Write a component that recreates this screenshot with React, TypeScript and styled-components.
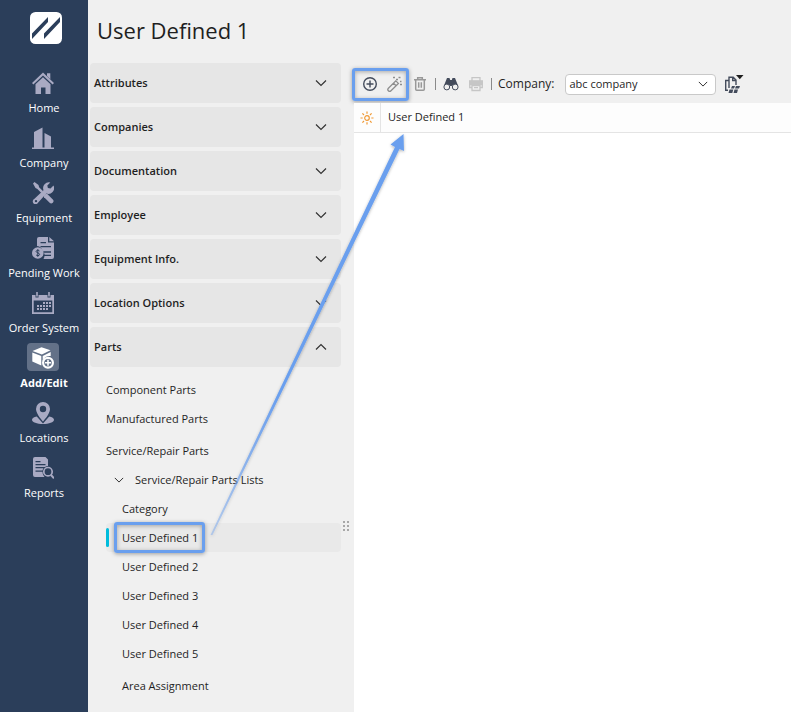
import React, { useState } from "react";
import styled, { createGlobalStyle } from "styled-components";

const Global = createGlobalStyle`
  *, *::before, *::after { box-sizing: border-box; }
  body { margin: 0; background: #f0f0f0; }
  body, button, select { font-family: "Open Sans", "Noto Sans", sans-serif; }
  button { margin: 0; padding: 0; border: 0; background: none; color: inherit; cursor: pointer; }
`;

const HIGHLIGHT = "#6a9fee";

const Shell = styled.div`
  position: relative;
  display: flex;
  min-height: 100vh;
  background: #f0f0f0;
  color: #1f1f1f;
`;

const Sidebar = styled.nav`
  flex: 0 0 88px;
  display: flex;
  flex-direction: column;
  align-items: center;
  padding-top: 12px;
  background: #2b3e5a;
`;

const Logo = styled.svg`
  width: 32px;
  height: 32px;
  margin: 0 0 24px 4px;
`;

const NavItem = styled.button<{ $active?: boolean }>`
  display: flex;
  flex-direction: column;
  align-items: center;
  gap: 4px;
  width: 100%;
  height: 55px;
  color: #fff;
  font-size: 11px;
  font-weight: ${(p) => (p.$active ? 700 : 400)};
  line-height: 16px;
  white-space: nowrap;
`;

const NavIcon = styled.span<{ $active?: boolean }>`
  display: flex;
  align-items: center;
  justify-content: center;
  width: 32px;
  height: 28px;
  margin-right: 2px;
  padding-top: 1px;
  border-radius: 4px;
  background: ${(p) => (p.$active ? "#637188" : "transparent")};
  color: ${(p) => (p.$active ? "#fff" : "#a9aac3")};
`;

const Content = styled.div`
  flex: 1;
  min-width: 0;
  display: flex;
  flex-direction: column;
`;

const Title = styled.h1`
  margin: 0;
  padding: 14px 9px 17px;
  font-size: 22px;
  font-weight: 400;
  line-height: 32px;
`;

const Columns = styled.div`
  flex: 1;
  display: flex;
`;

const TreePane = styled.div`
  flex: 0 0 253px;
  padding-left: 2px;
`;

const Accordion = styled.div`
  display: flex;
  flex-direction: column;
  gap: 4px;
`;

const AccordionHeader = styled.button`
  display: flex;
  align-items: center;
  justify-content: space-between;
  height: 40px;
  padding: 0 14px 0 4px;
  border-radius: 4px;
  background: #e6e6e6;
  font-size: 11px;
  font-weight: 600;
  line-height: 16px;
`;

const TreeList = styled.ul`
  display: flex;
  flex-direction: column;
  margin: 0;
  padding: 8px 0 0 16px;
  list-style: none;
`;

const TreeRow = styled.li<{ $selected?: boolean; $gap?: boolean }>`
  display: flex;
  align-items: center;
  height: 29px;
  margin-top: ${(p) => (p.$gap ? 3 : 0)}px;
  border-radius: 4px;
  background: ${(p) => (p.$selected ? "#e9e9e9" : "transparent")};
`;

const TreeLink = styled.button<{ $level: number }>`
  display: flex;
  align-items: center;
  gap: 11px;
  padding-left: ${(p) => p.$level * 8}px;
  font-size: 11px;
  line-height: 16px;
  white-space: nowrap;
`;

const SelectedBar = styled.span`
  width: 3px;
  height: 19px;
  margin-right: 5px;
  border-radius: 2px;
  background: #00bcdc;
`;

const Callout = styled.div`
  display: flex;
  align-items: center;
  height: 31px;
  border: 3px solid ${HIGHLIGHT};
  border-radius: 3px;
  box-shadow: 0 1px 4px rgba(0, 0, 0, 0.35), inset 0 1px 4px rgba(0, 0, 0, 0.3);
`;

const TreeCallout = styled(Callout)`
  flex: none;
  padding: 0 4px 0 5px;
`;

const Splitter = styled.div`
  flex: 0 0 13px;
  padding: 458px 0 0 2px;
  color: #a8a8a8;
  & > svg { display: block; }
`;

const Main = styled.main`
  flex: 1;
  min-width: 0;
  display: flex;
  flex-direction: column;
`;

const Toolbar = styled.div`
  display: flex;
  align-items: center;
  height: 40px;
  padding-top: 2px;
  white-space: nowrap;
`;

const ToolCallout = styled(Callout)`
  height: 33px;
  gap: 9px;
  margin-left: -2px;
  padding: 0 3px 0 7px;
`;

const ToolButton = styled.button<{ $tone?: string }>`
  display: flex;
  flex: none;
  width: 16px;
  height: 16px;
  color: ${(p) => p.$tone ?? "#444c5c"};
`;

const Tools = styled.div`
  display: flex;
  align-items: center;
  gap: 7px;
  margin-left: 3px;
`;

const ToolGroup = styled.div`
  display: flex;
  gap: 9px;
`;

const Divider = styled.span`
  width: 1px;
  height: 12px;
  background: #8a8a8a;
`;

const CompanyLabel = styled.label`
  margin-left: 6px;
  font-size: 12px;
  line-height: 16px;
`;

const SelectWrap = styled.div`
  display: grid;
  flex: none;
  align-items: center;
  width: 151px;
  margin: 0 8px 0 11px;
  & > * { grid-area: 1 / 1; }
  & > svg { justify-self: end; margin-right: 8px; pointer-events: none; }
`;

const CompanySelect = styled.select`
  width: 100%;
  height: 21px;
  padding: 0 20px 2px 3px;
  border: 1px solid #c9c9c9;
  border-radius: 4px;
  background: #fff;
  color: #1f1f1f;
  font-size: 11px;
  appearance: none;
`;

const ExportButton = styled.button`
  display: flex;
  flex: none;
`;

const RecordPane = styled.div`
  flex: 1;
  background: #fff;
`;

const RecordRow = styled.div`
  display: flex;
  height: 30px;
  border-bottom: 1px solid #e4e4e4;
  background: #fdfdfd;
  font-size: 11px;
  line-height: 28px;
`;

const RecordIcon = styled.span`
  display: flex;
  align-items: center;
  justify-content: center;
  width: 27px;
  border-right: 1px solid #e4e4e4;
`;

const RecordName = styled.span`
  padding-left: 7px;
`;

const Arrow = styled.svg`
  position: absolute;
  left: 200px;
  top: 125px;
  width: 220px;
  height: 420px;
  pointer-events: none;
`;

const Chevron = ({ up = false, size = 12 }: { up?: boolean; size?: number }) => (
  <svg width={size} height={size} viewBox="0 0 12 12" fill="none" stroke="#333" strokeWidth="1.2">
    <path d={up ? "M1 8.5 6 3.5l5 5" : "M1 3.5l5 5 5-5"} />
  </svg>
);

const navIcons: Record<string, React.ReactNode> = {
  Home: (
    <>
      <path d="M11 .5 22 11l-1.4 1.5L11 3.6 1.4 12.5 0 11Z" />
      <path d="M15 1.2h3.3v6L15 4Z" />
      <path d="M11 5.2l7.500 7V22h-5v-6.500h-4.500V22H3.500v-9.800Z" />
    </>
  ),
  Company: <path d="M0 20.500h2V5l8.500-4.500v20h2V6l6.500 3.500v11h3V22H0Z" />,
  Equipment: (
    <>
      <path d="M1 1.500 2.500 0l4 3 .6 2.200 4 4-1.700 1.700-4-4L3.500 6Z" />
      <path d="M12 13.500l1.800-1.800 1.500.3 5.500 5.500a2.200 2.200 0 0 1-3.200 3.200l-5.500-5.500Z" />
      <path d="M21.500 3.500 18.500 6.500l-2.600-.6-.6-2.500L18.300.5a5.800 5.800 0 0 0-6.800 7.700L2.200 17a2.800 2.800 0 1 0 3.800 3.800l8.300-9.300a5.800 5.800 0 0 0 7.200-8ZM4 20.300a1.200 1.200 0 1 1 0-2.400 1.200 1.200 0 0 1 0 2.400Z" />
    </>
  ),
  "Pending Work": (
    <>
      <path d="M7 0h9v5.500h6V20a2 2 0 0 1-2 2h-8.500a7 7 0 0 0 1-3H19v-1.300h-6.300a7 7 0 0 0-.8-2H19v-1.400h-8.300A7 7 0 0 0 5 9V2a2 2 0 0 1 2-2Zm1.500 5v1.300H14V5Zm0 4v1.300H19V9Z" />
      <path d="M17.300 0 22 4.300h-4.700Z" />
      <circle cx="5.800" cy="16" r="5.800" />
      <path d="M7.500 14c-.6-.9-3.400-1-3.400.5s3.500 1.200 3.500 2.900-3 1.500-3.600.4M5.800 12.200v7.600" fill="none" stroke="#2b3e5a" strokeWidth="1" />
    </>
  ),
  "Order System": (
    <>
      <path fillRule="evenodd" d="M0 3h3.500v2.500h3V3h9v2.500h3V3H22v19H0ZM1.700 8.500v11.800h18.600V8.500Z" />
      <path d="M4.200 0h1.600v4.500H4.200ZM16.200 0h1.600v4.500h-1.600Z" />
      <path d="M11 10h2v2h-2Zm3 0h2v2h-2Zm3 0h2v2h-2ZM5 13h2v2H5Zm3 0h2v2H8Zm3 0h2v2h-2Zm3 0h2v2h-2Zm3 0h2v2h-2ZM5 16h2v2H5Zm3 0h2v2H8Zm3 0h2v2h-2Zm3 0h2v2h-2Z" />
    </>
  ),
  "Add/Edit": (
    <>
      <path d="M.5 4 9.500.3l9 3-8.600 4.200Z" />
      <path d="M.3 5.500l9 3.500v9.500l-9-4Z" />
      <path d="M10.700 9l8-4v4a7 7 0 0 0-8 5Z" />
      <circle cx="16" cy="15.700" r="4.900" fill="none" stroke="currentColor" strokeWidth="2.200" />
      <path d="M15.200 12.800h1.600V15h2.200v1.500h-2.200v2.200h-1.600v-2.200H13V15h2.200Z" />
    </>
  ),
  Locations: (
    <>
      <path fillRule="evenodd" d="M11 0a7 7 0 0 1 7 7c0 5-7 12.500-7 12.500S4 12 4 7a7 7 0 0 1 7-7Zm0 3.800a3.200 3.200 0 1 0 0 6.400 3.200 3.200 0 0 0 0-6.400Z" />
      <path d="M4.800 14.500 11 21.500l6.200-7c3 .6 4.800 1.800 4.800 3.200 0 2.600-5 4.300-11 4.300S0 20.300 0 17.700c0-1.400 1.800-2.600 4.800-3.200Z" />
    </>
  ),
  Reports: (
    <>
      <path d="M3 0h10.500L16 2.500V9a6.500 6.500 0 0 0-3 1H3.500v1.300h8a6.500 6.500 0 0 0-1 2.200h-7v1.300h7c0 2 .8 3.600 2 5.200H3a2 2 0 0 1-2-2V2a2 2 0 0 1 2-2Zm.5 4v1.300h5V4Zm0 3v1.300h10V7Z" />
      <circle cx="16" cy="14.700" r="4.200" fill="none" stroke="currentColor" strokeWidth="1.700" />
      <path d="m19 18 3 3.200" stroke="currentColor" strokeWidth="2" />
    </>
  ),
};

const sections = [
  "Attributes",
  "Companies",
  "Documentation",
  "Employee",
  "Equipment Info.",
  "Location Options",
  "Parts",
];

const tree = [
  { label: "Component Parts", level: 0 },
  { label: "Manufactured Parts", level: 0 },
  { label: "Service/Repair Parts", level: 0, gap: true },
  { label: "Service/Repair Parts Lists", level: 1, branch: true },
  { label: "Category", level: 2 },
  { label: "User Defined 1", level: 2, selected: true },
  { label: "User Defined 2", level: 2 },
  { label: "User Defined 3", level: 2 },
  { label: "User Defined 4", level: 2 },
  { label: "User Defined 5", level: 2 },
  { label: "Area Assignment", level: 2, gap: true },
];

const PlusIcon = () => (
  <svg width="16" height="16" viewBox="0 0 16 16" fill="none" stroke="currentColor" strokeWidth="1.400">
    <circle cx="8" cy="8" r="6.300" />
    <path d="M8 4.500v7M4.500 8h7" />
  </svg>
);

const WandIcon = () => (
  <svg width="16" height="16" viewBox="0 0 16 16" fill="none" stroke="currentColor" strokeWidth="1.300">
    <path d="M1.400 12.200 8.800 4.800l2.600 2.600-7.400 7.400a1.800 1.800 0 0 1-2.600-2.600ZM6.500 7.200l2.600 2.600" />
    <path d="M6 1.500h2M9 3.500h2M11.500 1.500h2M13 5.500h1.500M13 8.500h2" />
  </svg>
);

const TrashIcon = () => (
  <svg width="16" height="16" viewBox="0 0 16 16" fill="none" stroke="currentColor" strokeWidth="1.500">
    <path d="M2 3.700h12M5.700 3.500V1.700h4.600v1.800M3.700 4v9.300c0 .6.400 1 1 1h6.600c.6 0 1-.4 1-1V4M6.700 6.200v5.600M9.300 6.200v5.600" />
  </svg>
);

const BinocularsIcon = () => (
  <svg width="16" height="16" viewBox="0 0 16 16" fill="currentColor">
    <path d="M4 2h2.500l.7 2h1.600l.7-2H12l3 7.500-2 .3-3.500-.8-.7 1H7.200l-.7-1L3 9.800 1 9.500Z" />
    <circle cx="3.800" cy="11" r="2.900" fill="#f0f0f0" stroke="currentColor" />
    <circle cx="12.200" cy="11" r="2.900" fill="#f0f0f0" stroke="currentColor" />
  </svg>
);

const PrinterIcon = () => (
  <svg width="16" height="16" viewBox="0 0 16 16" fill="none" stroke="currentColor" strokeWidth="1.300">
    <path d="M4 5V1.700h8V5M4 11.500H1.700V5h12.600v6.500H12" />
    <path d="M1.700 5.500h12.600v3H1.700Z" fill="currentColor" />
    <path d="M4 9.500h8v5H4ZM6 11.700h4" />
  </svg>
);

const ExportIcon = () => (
  <svg width="20" height="20" viewBox="0 0 20 20" fill="none" stroke="#444c5c" strokeWidth="1.400">
    <path d="M4 16.300H1.700V6.500H5M5 14V3.200h4.200l2.800 2.800v5M8.700 3.200V6.500H12" />
    <path d="M8 12h3l-1 2.500H7ZM12 12h4l-1 2.500h-4ZM5.500 15.500h3.800L8.300 19H4.500ZM10.500 15.500h3.500L13 19H9.500Z" fill="#444c5c" stroke="none" />
    <path d="M12 1h7.500l-3.700 4.200Z" fill="#1f1f1f" stroke="none" />
  </svg>
);

const SunIcon = () => (
  <svg width="14" height="14" viewBox="0 0 14 14" fill="none" stroke="#f09a36" strokeWidth="1.200">
    <circle cx="7" cy="7" r="2.300" />
    <path d="M7 .5v2.200M7 11.300v2.200M.5 7h2.200M11.300 7h2.200M2.400 2.400 4 4M10 10l1.600 1.600M2.400 11.600 4 10M10 4l1.600-1.600" />
  </svg>
);

export default function App() {
  const [page, setPage] = useState("Add/Edit");
  return (
    <>
      <Global />
      <Shell>
        <Sidebar>
          <Logo viewBox="0 0 32 32">
            <rect width="32" height="32" rx="5.500" fill="#fff" />
            <path d="M18 5v5L2 27v-5.500ZM30 5v5L14 27v-5.500Z" fill="#2b3e5a" />
          </Logo>
          {Object.entries(navIcons).map(([name, icon]) => (
            <NavItem key={name} $active={page === name} onClick={() => setPage(name)}>
              <NavIcon $active={page === name}>
                <svg width="22" height="22" viewBox="0 0 22 22" fill="currentColor">{icon}</svg>
              </NavIcon>
              {name}
            </NavItem>
          ))}
        </Sidebar>
        <Content>
          <Title>User Defined 1</Title>
          <Columns>
            <TreePane>
              <Accordion>
                {sections.map((s) => (
                  <AccordionHeader key={s} aria-expanded={s === "Parts"}>
                    {s}
                    <Chevron up={s === "Parts"} />
                  </AccordionHeader>
                ))}
              </Accordion>
              <TreeList>
                {tree.map((t) => (
                  <TreeRow key={t.label} $selected={t.selected} $gap={t.gap}>
                    {t.selected ? (
                      <>
                        <SelectedBar />
                        <TreeCallout>
                          <TreeLink $level={0}>{t.label}</TreeLink>
                        </TreeCallout>
                      </>
                    ) : (
                      <TreeLink $level={t.level}>
                        {t.branch && <Chevron size={10} />}
                        {t.label}
                      </TreeLink>
                    )}
                  </TreeRow>
                ))}
              </TreeList>
            </TreePane>
            <Splitter>
              <svg width="7" height="11" viewBox="0 0 7 11" fill="currentColor">
                <path d="M0 0h2v2H0ZM4 0h2v2H4ZM0 4h2v2H0ZM4 4h2v2H4ZM0 8h2v2H0ZM4 8h2v2H4Z" />
              </svg>
            </Splitter>
            <Main>
              <Toolbar>
                <ToolCallout>
                  <ToolButton aria-label="Add"><PlusIcon /></ToolButton>
                  <ToolButton aria-label="Edit" $tone="#8e8e8e"><WandIcon /></ToolButton>
                </ToolCallout>
                <Tools>
                  <ToolButton aria-label="Delete" $tone="#999"><TrashIcon /></ToolButton>
                  <Divider />
                  <ToolGroup>
                    <ToolButton aria-label="Find"><BinocularsIcon /></ToolButton>
                    <ToolButton aria-label="Print" $tone="#c6c6c6"><PrinterIcon /></ToolButton>
                  </ToolGroup>
                  <Divider />
                </Tools>
                <CompanyLabel htmlFor="company">Company:</CompanyLabel>
                <SelectWrap>
                  <CompanySelect id="company"><option>abc company</option></CompanySelect>
                  <Chevron size={10} />
                </SelectWrap>
                <ExportButton aria-label="Export"><ExportIcon /></ExportButton>
              </Toolbar>
              <RecordPane>
                <RecordRow>
                  <RecordIcon><SunIcon /></RecordIcon>
                  <RecordName>User Defined 1</RecordName>
                </RecordRow>
              </RecordPane>
            </Main>
          </Columns>
        </Content>
        <Arrow viewBox="0 0 220 420">
          <defs>
            <linearGradient id="fade" x1="0" y1="1" x2="0" y2="0">
              <stop offset="0" stopColor={HIGHLIGHT} stopOpacity="0.4" />
              <stop offset="0.35" stopColor={HIGHLIGHT} />
            </linearGradient>
            <filter id="shade" x="-20%" y="-20%" width="140%" height="140%">
              <feDropShadow dx="0" dy="1" stdDeviation="1.500" floodOpacity="0.3" />
            </filter>
          </defs>
          <path d="M10.500 410 195 22 190.500 19.500 203.500 9 204 26 199.500 24 12.500 410Z" fill="url(#fade)" filter="url(#shade)" />
        </Arrow>
      </Shell>
    </>
  );
}
